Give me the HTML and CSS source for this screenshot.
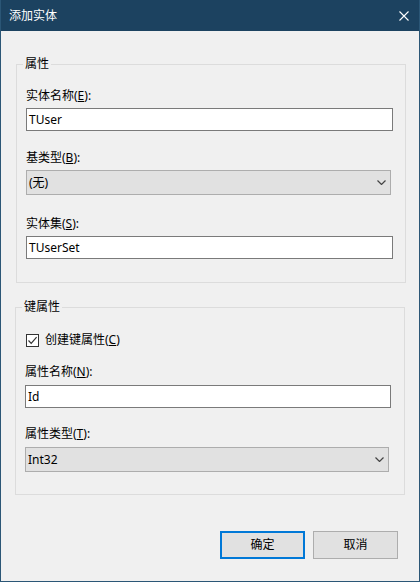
FILE: index.html
```html
<!DOCTYPE html>
<html>
<head>
<meta charset="utf-8">
<link rel="stylesheet" href="styles.css">
</head>
<body>
<div class="window">
  <div class="titlebar">
    <span class="title">添加实体</span>
    <svg class="close" width="10" height="10" viewBox="0 0 10 10"><path d="M0.5 0.5 L9.5 9.5 M9.5 0.5 L0.5 9.5" stroke="#ffffff" stroke-width="1.1" fill="none"/></svg>
  </div>
  <div class="content">
    <fieldset class="group g1">
      <legend>属性</legend>
      <div class="lbl">实体名称(<u>E</u>):</div>
      <div class="input">TUser</div>
      <div class="lbl gap-big">基类型(<u>B</u>):</div>
      <div class="select"><span>(无)</span><svg width="9" height="5" viewBox="0 0 9 5"><path d="M0.5 0.5 L4.5 4.5 L8.5 0.5" stroke="#444" stroke-width="1.2" fill="none"/></svg></div>
      <div class="lbl gap-big2">实体集(<u>S</u>):</div>
      <div class="input">TUserSet</div>
    </fieldset>
    <fieldset class="group g2">
      <legend>键属性</legend>
      <div class="check-row">
        <span class="checkbox"><svg width="11" height="11" viewBox="0 0 11 11"><path d="M1.5 5.5 L4.2 8.3 L9.6 2.2" stroke="#333" stroke-width="1.2" fill="none"/></svg></span>
        <span>创建键属性(<u>C</u>)</span>
      </div>
      <div class="lbl gap-mid">属性名称(<u>N</u>):</div>
      <div class="input">Id</div>
      <div class="lbl gap-big3">属性类型(<u>T</u>):</div>
      <div class="select"><span>Int32</span><svg width="9" height="5" viewBox="0 0 9 5"><path d="M0.5 0.5 L4.5 4.5 L8.5 0.5" stroke="#444" stroke-width="1.2" fill="none"/></svg></div>
    </fieldset>
    <div class="buttons">
      <div class="btn primary">确定</div>
      <div class="btn">取消</div>
    </div>
  </div>
</div>
</body>
</html>
```

FILE: styles.css
```css
html, body {
  margin: 0;
  padding: 0;
  background: #f0f0f0;
}
body {
  font-family: "Noto Sans", "Noto Sans CJK SC", sans-serif;
  font-size: 12px;
  color: #000;
}
.window {
  width: 420px;
  height: 582px;
  box-sizing: border-box;
  border: 1px solid #2b5676;
  border-top: 0;
  background: #f0f0f0;
  display: flex;
  flex-direction: column;
}
.titlebar {
  height: 31px;
  flex: none;
  background: #1c4260;
  color: #fff;
  display: flex;
  align-items: center;
  justify-content: space-between;
  padding: 0 10px 0 8px;
  font-size: 12px;
}
.title {
  line-height: 16px;
  padding-top: 1px;
}
.content {
  display: flex;
  flex-direction: column;
  padding: 25px 13px 0 15px;
}
.group {
  margin: 0;
  border: 1px solid #dcdcdc;
  padding: 16px 12px 23px 9px;
  min-inline-size: 0;
}
.group legend {
  padding: 0 2px;
  margin-left: -3px;
  line-height: 16px;
  font-size: 12px;
}
.g2 {
  margin: 16px 1px 0 -1px;
  padding: 17px 13px 22px 9px;
}
.lbl {
  line-height: 16px;
  height: 16px;
  margin-bottom: 4px;
  white-space: nowrap;
}
.g2 .lbl {
  margin-bottom: 5px;
}
.gap-big { margin-top: 19px; }
.gap-big2 { margin-top: 21px; }
.gap-mid { margin-top: 16px; }
.gap-big3 { margin-top: 18px; }
.lbl + .select { margin-top: 1px; }
.g2 .lbl + .select { margin-top: 0; }
.input {
  height: 23px;
  box-sizing: border-box;
  border: 1px solid #7a7a7a;
  background: #fff;
  padding: 0 2px;
  line-height: 21px;
}
.select {
  height: 25px;
  box-sizing: border-box;
  border: 1px solid #adadad;
  background: #e1e1e1;
  padding: 0 4px 0 2px;
  margin-right: 2px;
  line-height: 23px;
  display: flex;
  align-items: center;
  justify-content: space-between;
}
.check-row {
  display: flex;
  align-items: center;
  height: 16px;
  line-height: 16px;
  padding-left: 1px;
}
.checkbox {
  width: 13px;
  height: 13px;
  box-sizing: border-box;
  border: 1px solid #333;
  background: #fff;
  display: flex;
  align-items: center;
  justify-content: center;
  margin-right: 6px;
}
.buttons {
  display: flex;
  justify-content: flex-end;
  gap: 8px;
  margin-top: 36px;
  padding-right: 8px;
}
.btn {
  width: 85px;
  height: 28px;
  box-sizing: border-box;
  border: 1px solid #adadad;
  background: #e1e1e1;
  display: flex;
  align-items: center;
  justify-content: center;
  line-height: 16px;
}
.btn.primary {
  border: 2px solid #0078d7;
}
```
